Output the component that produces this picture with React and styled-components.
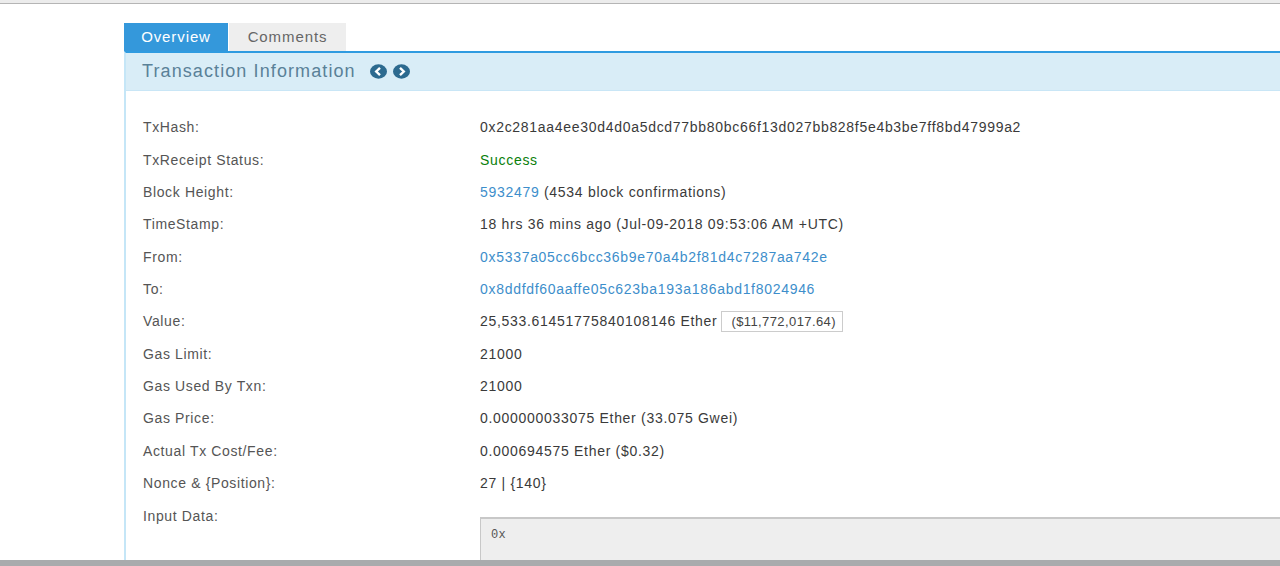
import React from "react";
import styled, { createGlobalStyle } from "styled-components";

const Global = createGlobalStyle`
  html, body { margin: 0; padding: 0; background: #fff; overflow: hidden; }
  * { box-sizing: border-box; }
`;
const Page = styled.div`
  width: 1280px; height: 566px; display: flex; flex-direction: column; overflow: hidden;
  font-family: "Liberation Sans", Arial, sans-serif; font-size: 14px; color: #444; letter-spacing: 0.7px;
`;
const TopBar = styled.div`
  height: 4px; flex: none; background: #ececec; border-bottom: 1px solid #b5b5b5;
`;
const Main = styled.main`
  flex: 1; min-height: 0; padding: 19px 0 0 124px; overflow: hidden;
`;
const BottomBar = styled.div`
  height: 6px; flex: none; background: #a9abad;
`;
const Tabs = styled.div`
  display: flex; gap: 1px; height: 28px; align-items: stretch;
`;
const Tab = styled.div`
  display: flex; align-items: center; justify-content: center; width: ${p => p.$w}px;
  background: ${p => (p.$active ? "#3498db" : "#eeeeee")};
  color: ${p => (p.$active ? "#fff" : "#666")};
  font-size: 15px; letter-spacing: 0.9px; padding-bottom: 2px;
`;
const Panel = styled.section`
  border-top: 2px solid #2f9be0; border-left: 2px solid #c5e6f7; height: 100%;
`;
const Header = styled.div`
  height: 38px; background: #d9edf7; border-bottom: 1px solid #c9e6f6; display: flex; align-items: center; gap: 14px;
  padding: 0 0 0 16px;
`;
const Title = styled.h2`
  margin: 0; font-size: 18px; font-weight: 400; color: #5a8198; letter-spacing: 1.1px;
`;
const Arrows = styled.div`
  display: flex; gap: 6px; align-items: center;
`;
const Body = styled.div`
  display: grid; grid-auto-rows: 32.33px; padding: 20.2px 0 0 17px;
`;
const Row = styled.div`
  display: grid; grid-template-columns: 337px 1fr; align-items: center; white-space: nowrap;
`;
const Label = styled.div`
  color: #555; letter-spacing: 0.63px;
`;
const Value = styled.div`
  color: #3a3a3a; display: flex; align-items: center;
`;
const Link = styled.a`
  color: #3d8ecb; text-decoration: none;
`;
const Status = styled.span`
  color: #0a800a;
`;
const Badge = styled.span`
  display: inline-block; margin-left: 4px; height: 21px; line-height: 19px; padding: 0 6px 0 9px;
  border: 1px solid #ccc; font-size: 13px; color: #444; letter-spacing: 0.4px;
`;
const InputRow = styled.div`
  display: grid; grid-template-columns: 337px 1fr; white-space: nowrap; padding-top: 9px;
`;
const InputBox = styled.pre`
  margin: 9px 0 0; height: 80px; background: #eeeeee; border-top: 2px solid #c8c8c8; border-left: 1px solid #c8c8c8;
  padding: 9px 10px; font-family: "Liberation Mono", monospace; font-size: 12px; letter-spacing: 0.4px; color: #555;
`;

const Arrow = ({ dir }) => (
  <svg width="17" height="15" viewBox="0 0 17 15" aria-hidden="true">
    <ellipse cx="8.5" cy="7.5" rx="8.5" ry="7.2" fill="#2c6a8f" />
    <path d={dir === "left" ? "M10 3.8 6.2 7.5 10 11.2" : "M7 3.8 10.8 7.5 7 11.2"} fill="none" stroke="#fff" strokeWidth="2.4" />
  </svg>
);

const rows = [
  ["TxHash:", "0x2c281aa4ee30d4d0a5dcd77bb80bc66f13d027bb828f5e4b3be7ff8bd47999a2"],
  ["TxReceipt Status:", <Status>Success</Status>],
  ["Block Height:", <span><Link>5932479</Link> (4534 block confirmations)</span>],
  ["TimeStamp:", "18 hrs 36 mins ago (Jul-09-2018 09:53:06 AM +UTC)"],
  ["From:", <Link>0x5337a05cc6bcc36b9e70a4b2f81d4c7287aa742e</Link>],
  ["To:", <Link>0x8ddfdf60aaffe05c623ba193a186abd1f8024946</Link>],
  ["Value:", <><span>25,533.61451775840108146 Ether</span><Badge>($11,772,017.64)</Badge></>],
  ["Gas Limit:", "21000"],
  ["Gas Used By Txn:", "21000"],
  ["Gas Price:", "0.000000033075 Ether (33.075 Gwei)"],
  ["Actual Tx Cost/Fee:", "0.000694575 Ether ($0.32)"],
  ["Nonce & {Position}:", "27 | {140}"],
];

export default function App() {
  return (
    <Page>
      <Global />
      <TopBar />
      <Main>
        <Tabs>
          <Tab $active $w={104}>Overview</Tab>
          <Tab $w={117}>Comments</Tab>
        </Tabs>
        <Panel>
          <Header>
            <Title>Transaction Information</Title>
            <Arrows><Arrow dir="left" /><Arrow dir="right" /></Arrows>
          </Header>
          <Body>
            {rows.map(([l, v]) => (
              <Row key={l}><Label>{l}</Label><Value>{v}</Value></Row>
            ))}
            <InputRow>
              <Label>Input Data:</Label>
              <InputBox>0x</InputBox>
            </InputRow>
          </Body>
        </Panel>
      </Main>
      <BottomBar />
    </Page>
  );
}
